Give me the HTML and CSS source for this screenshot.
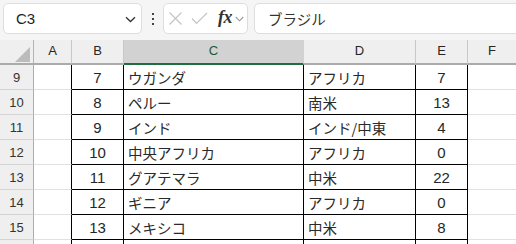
FILE: index.html
```html
<!DOCTYPE html>
<html lang="ja">
<head>
<meta charset="utf-8">
<link rel="stylesheet" href="styles.css">
</head>
<body>
<div class="app">
  <div class="toolbar">
    <div class="namebox">
      <span class="ref">C3</span>
      <svg class="chev" width="11" height="7" viewBox="0 0 11 7"><polyline points="1,1.2 5.5,5.5 10,1.2" fill="none" stroke="#333" stroke-width="1.3"/></svg>
    </div>
    <div class="dots"><i></i><i></i><i></i></div>
    <div class="fbuttons">
      <svg width="15" height="15" viewBox="0 0 15 15"><path d="M1.5 1.5 L13.5 13.5 M13.5 1.5 L1.5 13.5" stroke="#c4c4c4" stroke-width="1.2" fill="none"/></svg>
      <svg width="17" height="13" viewBox="0 0 17 13"><polyline points="1,6.5 5.5,11.5 16,1" fill="none" stroke="#c4c4c4" stroke-width="1.2"/></svg>
      <span class="fx">fx</span>
      <svg class="chev2" width="9" height="6" viewBox="0 0 9 6"><polyline points="0.8,1 4.5,4.8 8.2,1" fill="none" stroke="#9a9a9a" stroke-width="1.1"/></svg>
    </div>
    <div class="formula">ブラジル</div>
  </div>
  <div class="grid">
    <div class="corner"><span class="tri"></span></div>
    <div class="ch">A</div>
    <div class="ch">B</div>
    <div class="ch sel">C</div>
    <div class="ch">D</div>
    <div class="ch">E</div>
    <div class="ch last">F</div>

    <div class="rh">9</div><div class="ca"></div><div class="cb">7</div><div class="cc">ウガンダ</div><div class="cd">アフリカ</div><div class="ce">7</div><div class="cf"></div>
    <div class="rh">10</div><div class="ca"></div><div class="cb">8</div><div class="cc">ペルー</div><div class="cd">南米</div><div class="ce">13</div><div class="cf"></div>
    <div class="rh">11</div><div class="ca"></div><div class="cb">9</div><div class="cc">インド</div><div class="cd">インド/中東</div><div class="ce">4</div><div class="cf"></div>
    <div class="rh">12</div><div class="ca"></div><div class="cb">10</div><div class="cc">中央アフリカ</div><div class="cd">アフリカ</div><div class="ce">0</div><div class="cf"></div>
    <div class="rh">13</div><div class="ca"></div><div class="cb">11</div><div class="cc">グアテマラ</div><div class="cd">中米</div><div class="ce">22</div><div class="cf"></div>
    <div class="rh">14</div><div class="ca"></div><div class="cb">12</div><div class="cc">ギニア</div><div class="cd">アフリカ</div><div class="ce">0</div><div class="cf"></div>
    <div class="rh">15</div><div class="ca"></div><div class="cb">13</div><div class="cc">メキシコ</div><div class="cd">中米</div><div class="ce">8</div><div class="cf"></div>
    <div class="rh"></div><div class="ca"></div><div class="cb"></div><div class="cc"></div><div class="cd"></div><div class="ce"></div><div class="cf"></div>
  </div>
</div>
</body>
</html>
```
FILE: styles.css
```css
* { box-sizing: border-box; }
html, body { margin: 0; padding: 0; }
body {
  width: 516px;
  height: 244px;
  overflow: hidden;
  background: #fff;
  font-family: "Liberation Sans", "Noto Sans CJK JP", sans-serif;
  color: #1f1f1f;
}
.app { width: 516px; height: 244px; overflow: hidden; }

.toolbar {
  height: 40px;
  background: #f5f5f5;
  display: flex;
  align-items: flex-start;
  padding: 3px 0 0 3px;
}
.namebox {
  width: 139px;
  height: 31px;
  background: #fff;
  border: 1px solid #dedede;
  border-radius: 5px;
  display: flex;
  align-items: center;
  justify-content: space-between;
  padding: 0 5px 0 12px;
  flex: none;
}
.ref { font-size: 15px; color: #1f1f1f; }
.chev { margin-top: 1px; }
.dots {
  width: 21px;
  height: 31px;
  display: flex;
  flex-direction: column;
  align-items: center;
  justify-content: center;
  gap: 3px;
  flex: none;
}
.dots i { display: block; width: 2px; height: 2px; background: #444; }
.fbuttons {
  width: 85px;
  height: 31px;
  background: #fff;
  border: 1px solid #dedede;
  border-radius: 5px;
  display: flex;
  align-items: center;
  padding: 0 0 0 4px;
  gap: 8px;
  flex: none;
}
.fx {
  font-family: "Liberation Serif", serif;
  font-style: italic;
  font-weight: bold;
  font-size: 18px;
  color: #333;
  margin-left: 2px;
  margin-top: -2px;
  letter-spacing: -0.5px;
}
.chev2 { margin-left: -5px; }
.formula {
  margin-left: 6px;
  flex: 1;
  margin-right: -20px;
  height: 31px;
  background: #fff;
  border: 1px solid #dedede;
  border-radius: 5px;
  display: flex;
  align-items: center;
  padding-left: 13px;
  font-family: "Noto Sans CJK JP", sans-serif;
  font-size: 14.5px;
  color: #333;
}

.grid {
  display: grid;
  grid-template-columns: 34px 38px 52px 180px 112px 52px 1fr;
  grid-template-rows: 25px;
  grid-auto-rows: 25px;
  font-size: 15px;
}
.corner, .ch {
  background: #efefef;
  border-bottom: 2px solid #ababab;
}
.corner {
  position: relative;
  border-right: 1px solid #b3b3b3;
}
.tri {
  position: absolute;
  right: 3px;
  bottom: 1px;
  width: 0; height: 0;
  border-left: 15px solid transparent;
  border-bottom: 15px solid #bcbcbc;
}
.ch {
  display: flex;
  align-items: center;
  justify-content: center;
  padding-bottom: 3px;
  font-size: 13px;
  color: #262626;
  border-right: 1px solid #c8c8c8;
}
.ch.sel {
  background: #d2d2d2;
  color: #185c37;
  border-bottom-color: #1e6e42;
  border-right-color: #d2d2d2;
}
.ch.last { border-right: none; }

.rh {
  background: #efefef;
  border-right: 1px solid #adadad;
  border-bottom: 1px solid #d4d4d4;
  display: flex;
  align-items: center;
  justify-content: center;
  font-size: 13px;
  color: #333;
}
.ca {
  border-right: 1px solid #000;
  border-bottom: 1px solid #e1e1e1;
}
.cb, .cc, .cd, .ce {
  border-right: 1px solid #000;
  border-bottom: 1px solid #000;
  display: flex;
  align-items: center;
  color: #262626;
}
.cb, .ce { justify-content: center; }
.cc, .cd {
  font-family: "Noto Sans CJK JP", sans-serif;
  font-size: 14.5px;
  padding-left: 4px;
  color: #2a2a2a;
}
.cf { border-bottom: 1px solid #e1e1e1; }
```
